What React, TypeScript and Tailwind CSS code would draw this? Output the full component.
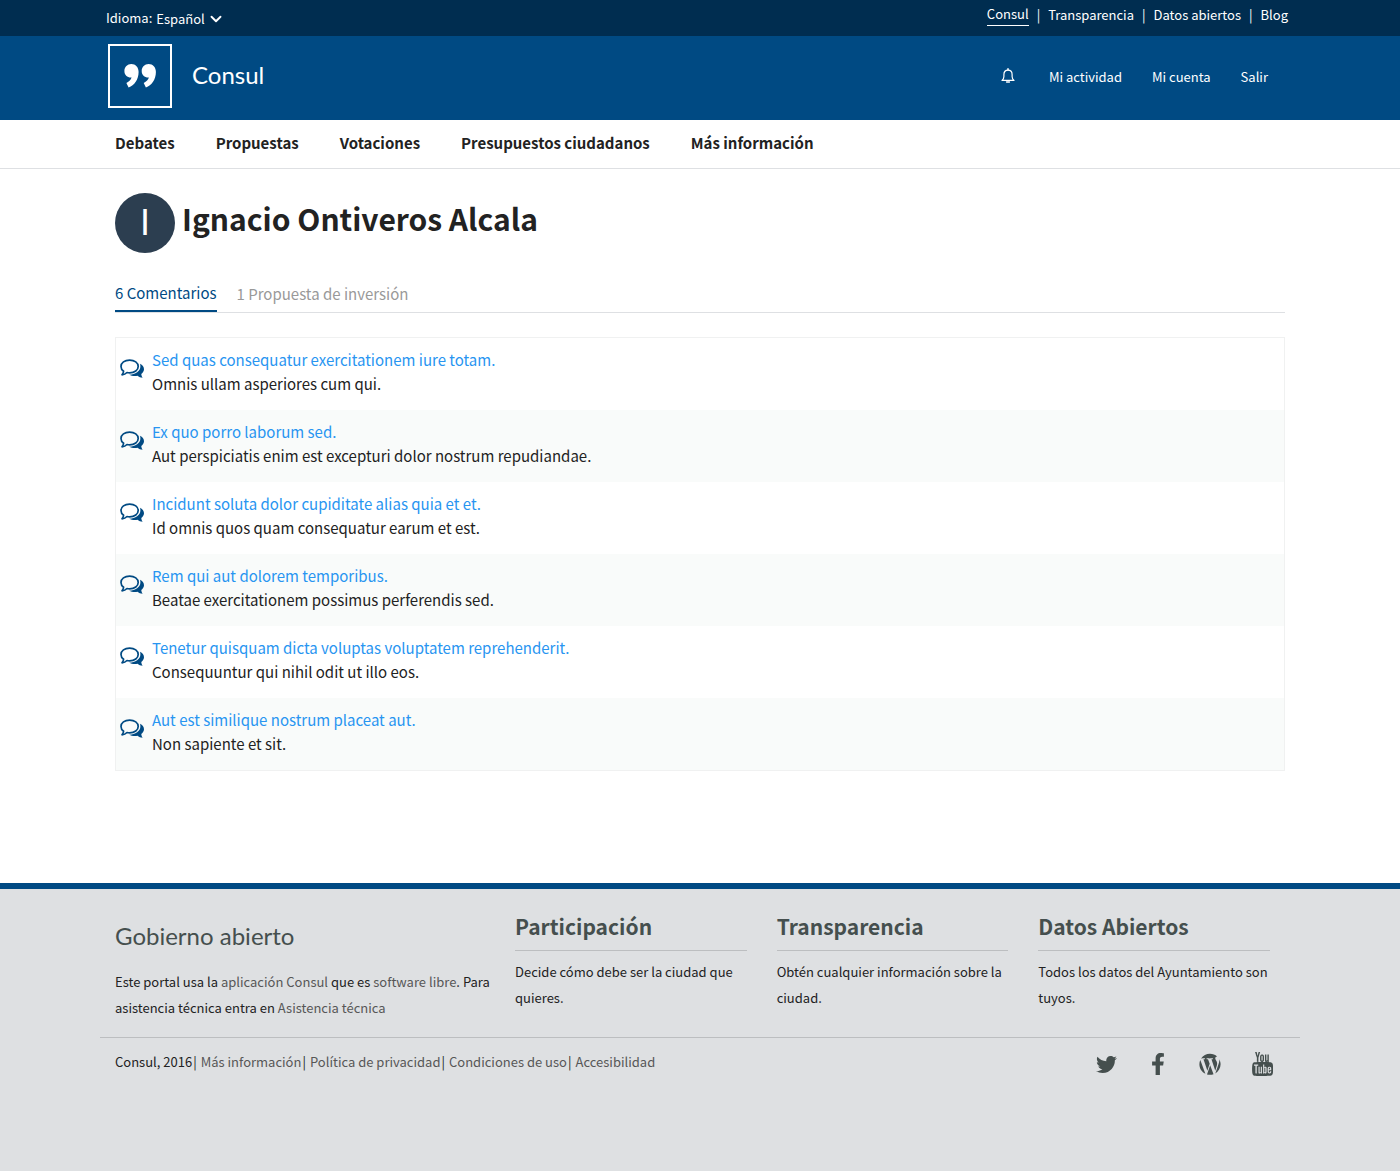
import React from 'react';
import { FaFacebookF, FaTwitter } from 'react-icons/fa';
import { DiWordpress } from 'react-icons/di';
import { ImYoutube2 } from 'react-icons/im';
import { ChevronDown } from 'lucide-react';

const comments = [
  ['Sed quas consequatur exercitationem iure totam.', 'Omnis ullam asperiores cum qui.'],
  ['Ex quo porro laborum sed.', 'Aut perspiciatis enim est excepturi dolor nostrum repudiandae.'],
  ['Incidunt soluta dolor cupiditate alias quia et et.', 'Id omnis quos quam consequatur earum et est.'],
  ['Rem qui aut dolorem temporibus.', 'Beatae exercitationem possimus perferendis sed.'],
  ['Tenetur quisquam dicta voluptas voluptatem reprehenderit.', 'Consequuntur qui nihil odit ut illo eos.'],
  ['Aut est similique nostrum placeat aut.', 'Non sapiente et sit.'],
];

const sections = [
  ['Participación', 'Decide cómo debe ser la ciudad que quieres.'],
  ['Transparencia', 'Obtén cualquier información sobre la ciudad.'],
  ['Datos Abiertos', 'Todos los datos del Ayuntamiento son tuyos.'],
];

const topLinks = ['Consul', 'Transparencia', 'Datos abiertos', 'Blog'];
const navLinks = ['Debates', 'Propuestas', 'Votaciones', 'Presupuestos ciudadanos', 'Más información'];
const legalLinks = ['Más información', 'Política de privacidad', 'Condiciones de uso', 'Accesibilidad'];

function Logo() {
  return (
    <svg viewBox="0 0 64 64" className="h-16 w-16" fill="white" aria-hidden="true">
      <rect x="1" y="1" width="62" height="62" fill="none" stroke="white" strokeWidth="2" />
      <path id="mark" d="M23.3 20C27.5 20 30.6 23.2 30.6 28C30.6 35.5 26.3 41.5 20.6 43.4L18.4 39C21.2 37.6 23 35.8 23.6 33.6C19.4 33.9 16.4 31 16.4 27C16.4 23 19.4 20 23.3 20Z" />
      <use href="#mark" x="17.3" />
    </svg>
  );
}

function Bell() {
  return (
    <svg viewBox="0 0 14 16" className="h-4 w-3.5" fill="none" stroke="white" strokeWidth="1.2" aria-hidden="true">
      <path d="M1 12.4H13C11.7 11.5 11.1 10.4 11.1 8.6V6.4C11.1 3.7 9.4 2.1 7 2.1S2.9 3.7 2.9 6.4V8.6C2.9 10.4 2.3 11.5 1 12.4Z" strokeLinejoin="round" />
      <path d="M7 0.8V2M5.6 14H8.4" strokeWidth="1.5" strokeLinecap="round" />
    </svg>
  );
}

function Bubbles() {
  return (
    <svg viewBox="0 0 24 20" className="h-5 w-6" fill="#004a83" aria-hidden="true">
      <path d="M9.6 1.1C14.6 1.1 18.2 3.8 18.2 7.4S14.6 13.8 9.6 13.8C8.6 13.8 7.8 13.7 7 13.5C5.6 15 3.9 15.7 2 15.8C2.9 14.8 3.5 13.6 3.6 12.3C2 11.1 1 9.4 1 7.4C1 3.8 4.6 1.1 9.6 1.1Z" fill="none" stroke="#004a83" strokeWidth="1.7" strokeLinejoin="round" />
      <path d="M20 4.8C22.5 6 24 8 24 10.2C24 12.1 22.9 13.7 21.3 14.9C21.4 16.4 21.8 17.7 22.7 18.8C20.6 18.7 18.9 18 17.5 16.8C14.5 17.4 11.5 17 9.2 15.7C15.4 15.6 20.4 12.3 20.4 7.6C20.4 6.6 20.3 5.7 20 4.8Z" />
    </svg>
  );
}

function YouTubeStacked() {
  return (
    <span className="flex flex-col items-center">
      <ImYoutube2 viewBox="0 2.4 14.8 10.7" style={{ width: 14, height: 10 }} />
      <ImYoutube2 viewBox="16 0 24 16" style={{ width: 21, height: 14 }} />
    </span>
  );
}

const social = [
  ['Twitter', <FaTwitter size={21} />],
  ['Facebook', <FaFacebookF size={22} />],
  ['WordPress', <DiWordpress size={30} />],
  ['YouTube', <YouTubeStacked />],
] as const;

export default function App() {
  return (
    <div className="flex min-h-screen flex-col bg-white font-['Noto_Sans_CJK_SC',sans-serif] text-[15px] leading-6 text-[#222]">
      <header>
        <div className="bg-[#002d50] text-[13px] text-white">
          <div className="mx-auto flex h-9 max-w-[1200px] justify-between pr-3 pl-1.5">
            <div className="flex items-center gap-1">
              <label htmlFor="locale">Idioma:</label>
              <div className="relative flex items-center pt-0.5">
                <select id="locale" className="appearance-none bg-transparent pr-4 leading-6 outline-none">
                  <option>Español</option>
                </select>
                <ChevronDown strokeWidth={2.5} className="pointer-events-none absolute -right-1 size-[18px]" />
              </div>
            </div>
            <nav className="flex items-start pt-[3px]">
              {topLinks.map((label, i) => (
                <React.Fragment key={label}>
                  {i > 0 && <span className="px-2">|</span>}
                  <a href="#" className={i === 0 ? 'border-b border-white leading-[22px]' : ''}>{label}</a>
                </React.Fragment>
              ))}
            </nav>
          </div>
        </div>
        <div className="bg-[#004a83] text-white">
          <div className="mx-auto flex h-[84px] max-w-[1200px] items-start justify-between pt-2 pr-8 pl-2">
            <a href="#" className="flex items-center gap-5 font-[Lato] text-2xl">
              <Logo />
              <span className="pb-0.5">Consul</span>
            </a>
            <div className="flex h-[66px] items-center gap-[30px] text-[13px]">
              <button type="button" aria-label="Notificaciones" className="mr-1 pb-0.5"><Bell /></button>
              <a href="#">Mi actividad</a>
              <a href="#">Mi cuenta</a>
              <a href="#">Salir</a>
            </div>
          </div>
        </div>
        <div className="border-b border-[#dee0e3]">
          <nav className="mx-auto flex h-12 max-w-[1200px] items-center gap-[41px] px-[15px] pb-0.5 font-bold">
            {navLinks.map((label) => <a key={label} href="#">{label}</a>)}
          </nav>
        </div>
      </header>

      <main className="mx-auto w-full max-w-[1200px] px-[15px] pt-6 pb-28">
        <div className="flex items-start gap-[7px]">
          <div className="flex size-[60px] items-center justify-center rounded-full bg-[#2c3e50] font-['Liberation_Sans'] text-4xl text-white">I</div>
          <h1 className="text-3xl leading-[50px] font-bold">Ignacio Ontiveros Alcala</h1>
        </div>
        <div className="mt-6 flex items-end gap-5 border-b border-[#dee0e3]">
          <a href="#" className="border-b-2 border-[#004a83] pt-1 pb-[5px] text-[#004a83]">6 Comentarios</a>
          <a href="#" className="pt-1 pb-1.5 text-[#999]">1 Propuesta de inversión</a>
        </div>
        <table className="mt-6 w-full border-separate border-spacing-0 border border-[#f0f1f1]">
          <tbody>
            {comments.map(([title, body]) => (
              <tr key={title} className="even:bg-[#f9fbfa]">
                <td className="h-[72px] w-9 pt-[21px] pl-1 align-top"><Bubbles /></td>
                <td className="pt-[10px] align-top">
                  <a href="#" className="text-[#2895f1]">{title}</a>
                  <p>{body}</p>
                </td>
              </tr>
            ))}
          </tbody>
        </table>
      </main>

      <footer className="grow border-t-[6px] border-[#004a83] bg-[#dee0e2]">
        <div className="mx-auto max-w-[1200px] text-[13px] leading-[26px]">
          <div className="flex pr-[15px] pb-4">
            <div className="w-[400px] shrink-0 pt-[31px] pl-[15px]">
              <a href="#" className="font-[Lato] text-2xl leading-8 text-[#454f4e]">Gobierno abierto</a>
              <p className="mt-4">
                Este portal usa la <a href="#" className="text-[#575757]">aplicación Consul</a> que es{' '}
                <a href="#" className="text-[#575757]">software libre</a>. Para asistencia técnica entra en{' '}
                <a href="#" className="text-[#575757]">Asistencia técnica</a>
              </p>
            </div>
            <div className="grid grow grid-cols-3 pt-[21px]">
              {sections.map(([title, text]) => (
                <section key={title} className="px-[15px]">
                  <h2 className="border-b border-[#bcbec0] pb-2 text-[21px] leading-8 font-bold text-[#454f4e]">{title}</h2>
                  <p className="mt-2">{text}</p>
                </section>
              ))}
            </div>
          </div>
          <div className="flex items-start justify-between border-t border-[#bcbec0] pt-[11px] pr-3 pl-[15px]">
            <p className="flex">
              Consul, 2016
              {legalLinks.map((label) => (
                <span key={label} className="flex"><span className="pr-1 pl-px">|</span><a href="#" className="text-[#575757]">{label}</a></span>
              ))}
            </p>
            <div className="flex h-[30px] items-center text-[#454f4e]">
              {social.map(([name, icon]) => (
                <a key={name} href="#" aria-label={name} className="flex w-[52px] justify-center">{icon}</a>
              ))}
            </div>
          </div>
        </div>
      </footer>
    </div>
  );
}
